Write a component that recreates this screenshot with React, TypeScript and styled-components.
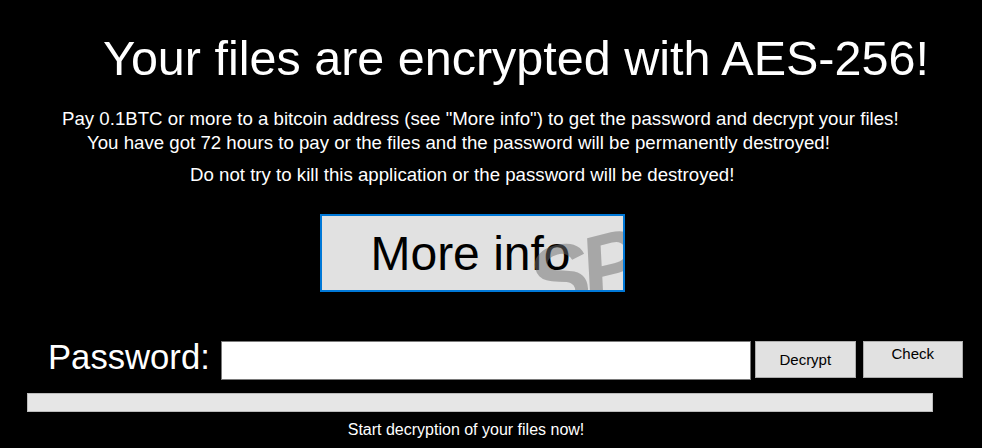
import React from 'react';
import styled, { createGlobalStyle } from 'styled-components';

const Global = createGlobalStyle`
  html, body {
    margin: 0;
    padding: 0;
    background: #000;
  }
  body {
    font-family: 'Liberation Sans', Arial, sans-serif;
    width: 982px;
    height: 448px;
    overflow: hidden;
  }
`;

const App = () => {
  return (
    <>
      <Global />
      <S.Screen>
        <S.Title>Your files are encrypted with AES-256!</S.Title>
        <S.Notes>
          <S.Line $indent={62}>
            Pay 0.1BTC or more to a bitcoin address (see "More info") to get the password and decrypt your files!
          </S.Line>
          <S.Line $indent={87}>
            You have got 72 hours to pay or the files and the password will be permanently destroyed!
          </S.Line>
          <S.Line $indent={190} $gap={8}>
            Do not try to kill this application or the password will be destroyed!
          </S.Line>
        </S.Notes>
        <S.InfoRow>
          <S.InfoButton>More info</S.InfoButton>
        </S.InfoRow>
        <S.PasswordRow>
          <S.Label>Password:</S.Label>
          <S.Input />
          <S.SmallButton $lift={0} $width={101} $gap={4}>
            Decrypt
          </S.SmallButton>
          <S.SmallButton $lift={6} $width={100} $gap={7}>
            Check
          </S.SmallButton>
        </S.PasswordRow>
        <S.Progress />
        <S.Footer>Start decryption of your files now!</S.Footer>
      </S.Screen>
    </>
  );
};

export default App;

const S = {
  Screen: styled.div`
    display: flex;
    flex-direction: column;
    width: 982px;
    height: 448px;
    color: #fff;
  `,
  Title: styled.div`
    margin: 30px 0 0 103px;
    font-size: 48.5px;
    line-height: 56px;
    white-space: nowrap;
  `,
  Notes: styled.div`
    display: flex;
    flex-direction: column;
    margin-top: 21px;
  `,
  Line: styled.div<{ $indent: number; $gap?: number }>`
    padding-left: ${(p) => p.$indent}px;
    margin-top: ${(p) => p.$gap ?? 0}px;
    font-size: 18.67px;
    line-height: 24px;
    white-space: nowrap;
  `,
  InfoRow: styled.div`
    display: flex;
    padding-left: 320px;
    margin-top: 27px;
  `,
  // the grey "SP" is the watermark that lies over the button in the picture
  InfoButton: styled.div`
    position: relative;
    overflow: hidden;
    box-sizing: border-box;
    width: 305px;
    height: 78px;
    border: 2px solid #0078d7;
    background: #e1e1e1;
    color: #000;
    font-size: 48px;
    display: flex;
    align-items: center;
    justify-content: center;
    padding-right: 4px;

    &::after {
      content: 'SP';
      position: absolute;
      left: 206px;
      top: 4px;
      font-size: 92px;
      font-weight: bold;
      font-style: italic;
      color: rgba(110, 110, 110, 0.5);
      letter-spacing: -8px;
      transform: rotate(-14deg);
    }
  `,
  PasswordRow: styled.div`
    display: flex;
    align-items: flex-start;
    margin-top: 49px;
    padding-left: 48px;
  `,
  Label: styled.div`
    font-size: 34.67px;
    line-height: 32px;
    margin-right: 11px;
    white-space: nowrap;
  `,
  Input: styled.div`
    box-sizing: border-box;
    width: 530px;
    height: 39px;
    background: #fff;
    border: 1px solid #7a7a7a;
  `,
  SmallButton: styled.div<{ $lift: number; $width: number; $gap: number }>`
    box-sizing: border-box;
    width: ${(p) => p.$width}px;
    height: 37px;
    margin-left: ${(p) => p.$gap}px;
    background: #e1e1e1;
    border: 1px solid #adadad;
    color: #000;
    font-size: 15px;
    display: flex;
    justify-content: center;
    align-items: center;
    padding-bottom: ${(p) => p.$lift * 2}px;
  `,
  Progress: styled.div`
    box-sizing: border-box;
    margin: 13px 0 0 27px;
    width: 906px;
    height: 19px;
    background: #e6e6e6;
    border: 1px solid #bcbcbc;
  `,
  Footer: styled.div`
    margin-top: 8px;
    text-align: center;
    padding-right: 50px;
    font-size: 16px;
    line-height: 20px;
  `
};
